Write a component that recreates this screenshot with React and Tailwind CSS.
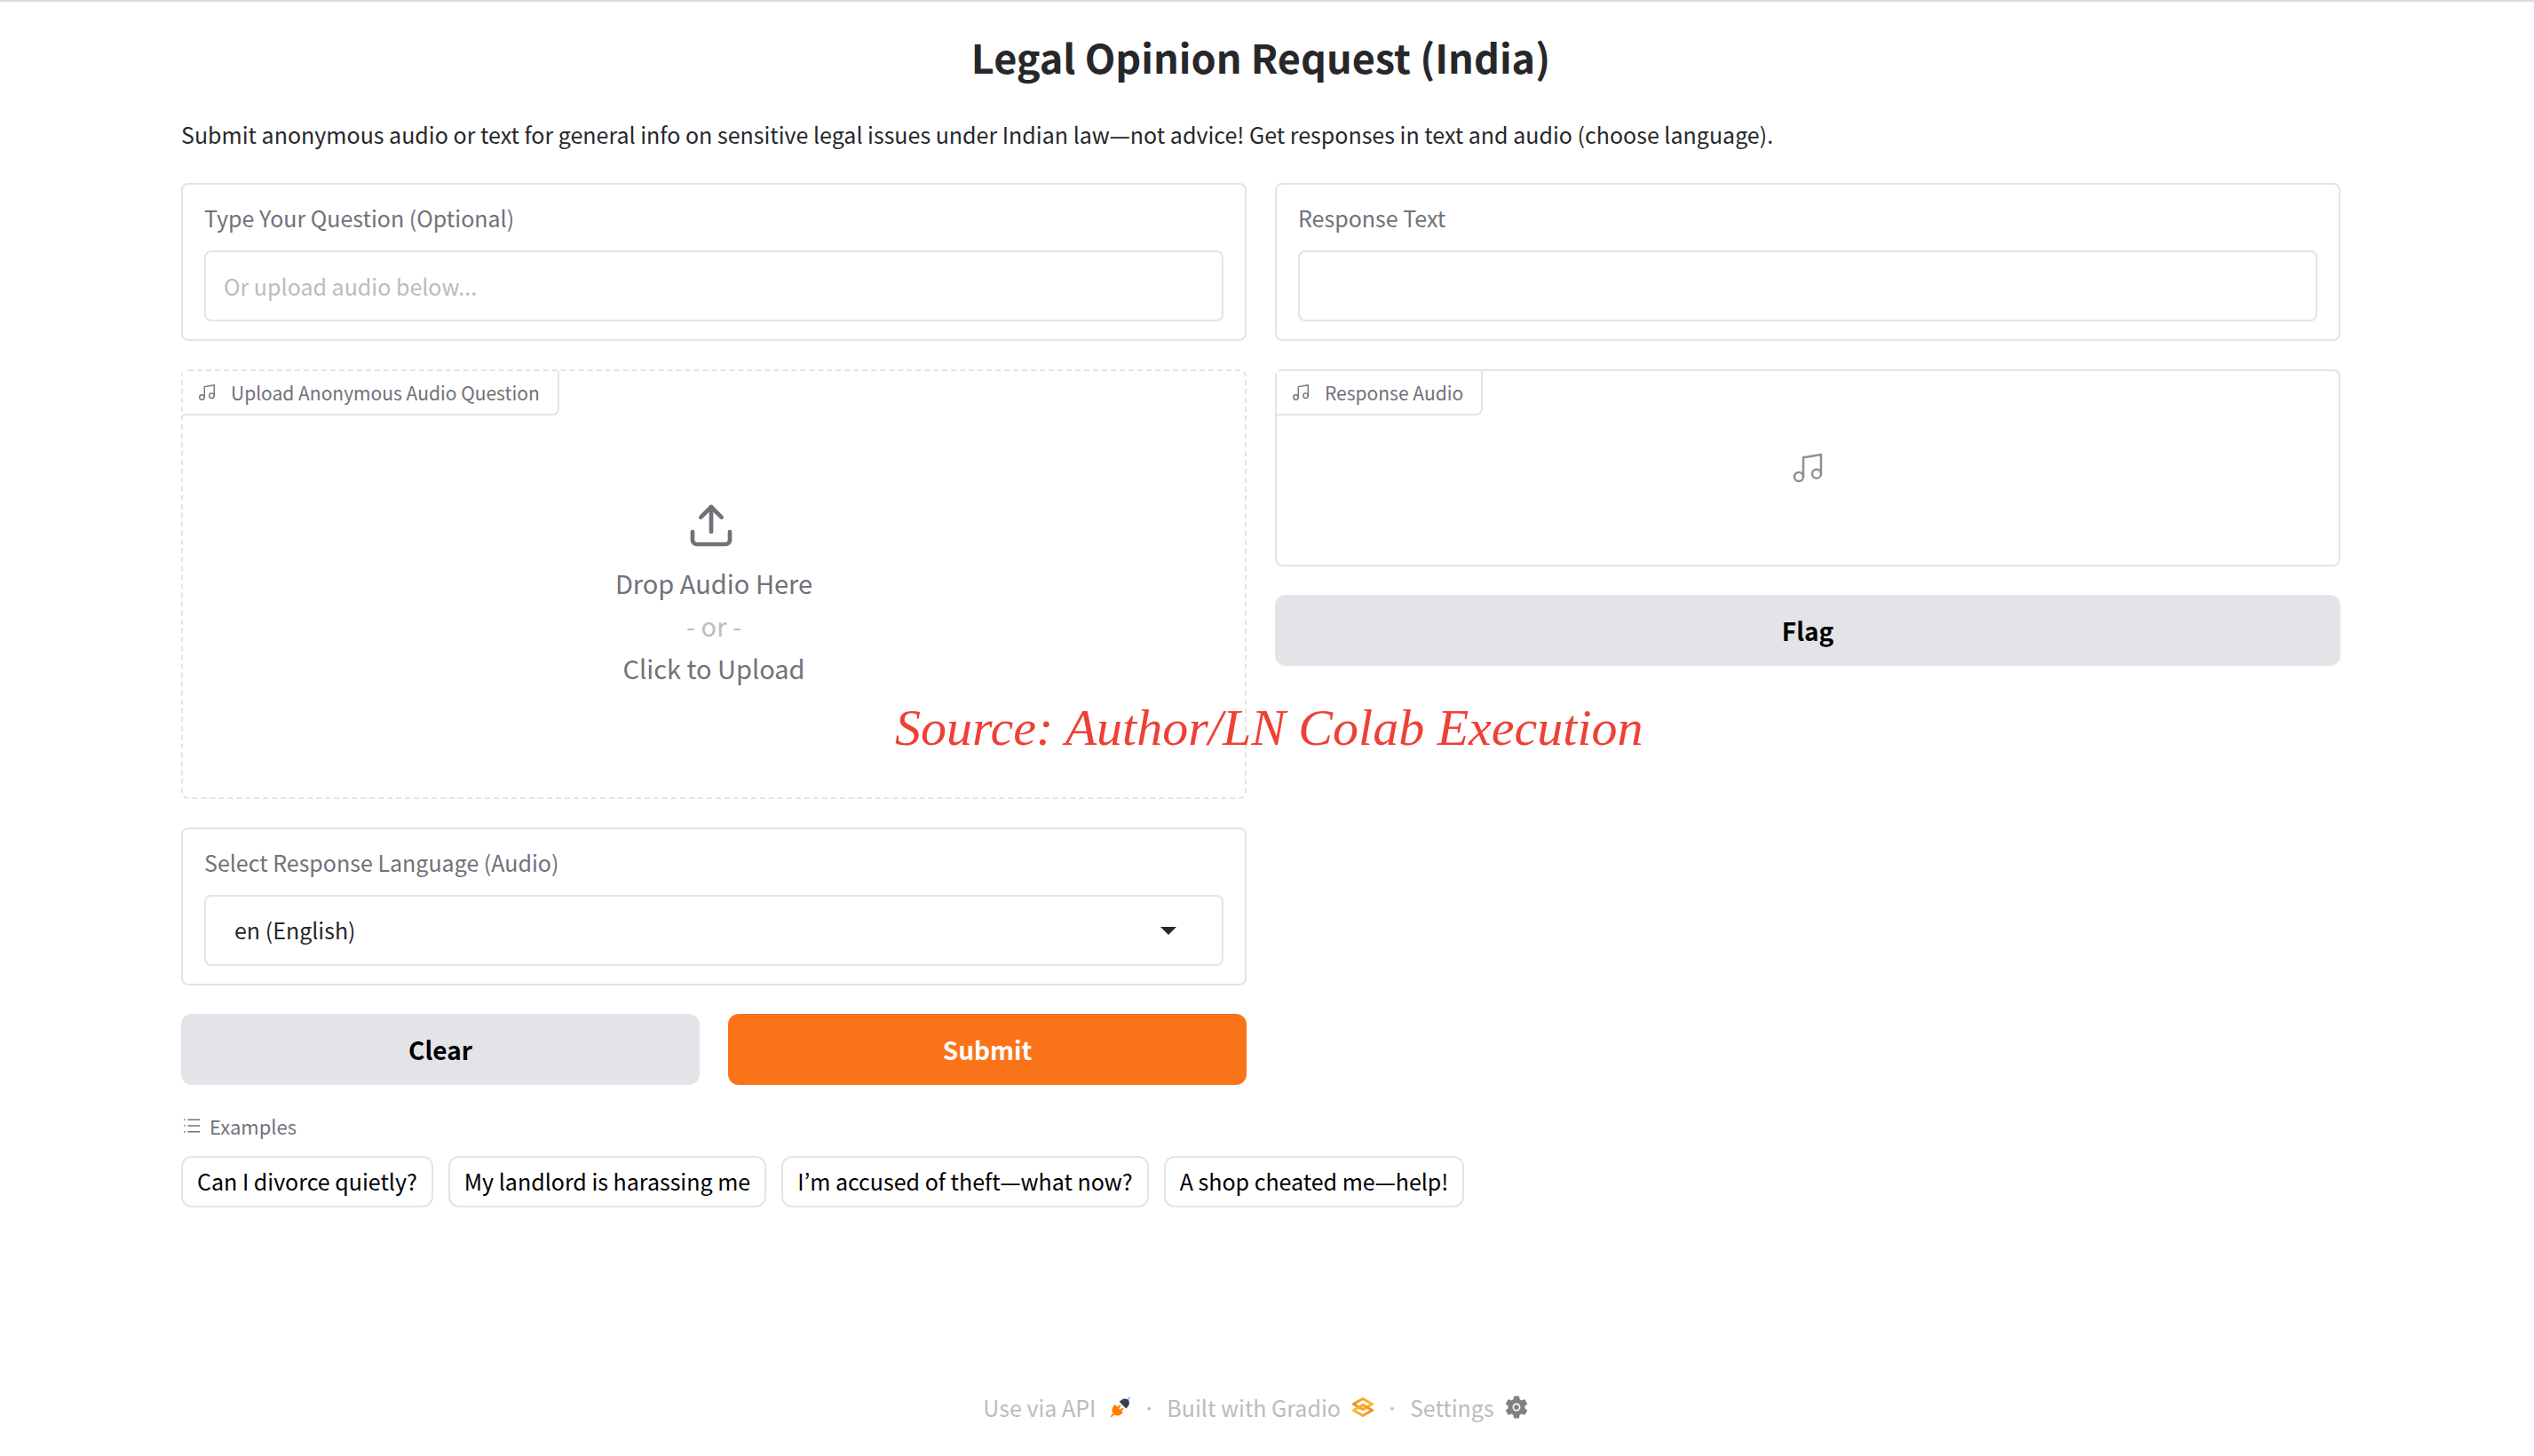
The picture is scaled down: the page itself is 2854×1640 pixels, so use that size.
import React from "react";

const examples = [
  ["Can I divorce quietly?"],
  ["My landlord is harassing me"],
  ["I’m accused of theft", "what now?"],
  ["A shop cheated me", "help!"],
];

function Dash() {
  return <span className="font-['Open_Sans','Noto_Sans',sans-serif] text-[23px]">—</span>;
}

function MusicIcon({ className }) {
  return (
    <svg viewBox="0 0 24 24" fill="none" stroke="currentColor" strokeWidth="1.5" strokeLinecap="round" strokeLinejoin="round" className={className} aria-hidden="true">
      <path d="M9 18V5l12-2v13" />
      <circle cx="6" cy="18" r="3" />
      <circle cx="18" cy="16" r="3" />
    </svg>
  );
}

function UploadIcon() {
  return (
    <svg viewBox="0 0 24 24" fill="none" stroke="currentColor" strokeWidth="2" strokeLinecap="round" strokeLinejoin="round" className="size-14" aria-hidden="true">
      <path d="M21 15v4a2 2 0 0 1-2 2H5a2 2 0 0 1-2-2v-4" />
      <polyline points="17 8 12 3 7 8" />
      <line x1="12" y1="3" x2="12" y2="15" />
    </svg>
  );
}

function ListIcon() {
  return (
    <svg viewBox="0 0 32 32" fill="currentColor" className="size-6" aria-hidden="true">
      <path d="M10 6h18v2H10zm0 18h18v2H10zm0-9h18v2H10zm-6 0h2v2H4zm0-9h2v2H4zm0 18h2v2H4z" />
    </svg>
  );
}

function PlugIcon() {
  return (
    <svg viewBox="0 0 24 24" className="size-6" aria-hidden="true">
      <path fill="#334155" d="M23 1.2 20.8 3.4c1.7 2.7 1.4 6-1 8.600l-1.600 1.600-7.500-7.500 1.600-1.600c2.500-2.400 5.600-2.600 8.200-.9L22.200.5z" />
      <path fill="#ff7c00" d="M4.400 10.600 6 9l2.700 2.700 2.400-2.400 1.500 1.500-2.400 2.400 1.500 1.500 2.400-2.400 1.500 1.500-2.400 2.400 1.700 1.700-1.700 1.700c-2.500 2.400-5.700 2.600-8.300.9L1.900 23.500.6 22.200l3.100-3.100c-1.900-2.600-1.700-6 .7-8.500z" />
    </svg>
  );
}

function GradioIcon() {
  return (
    <svg viewBox="0 0 26 24" fill="none" className="h-6 w-[26px]" aria-hidden="true">
      <defs>
        <linearGradient id="gradio-top" x1="0" y1="0" x2="1" y2="0">
          <stop offset="0" stopColor="#f58a1a" />
          <stop offset="1" stopColor="#f9c02e" />
        </linearGradient>
        <linearGradient id="gradio-bottom" x1="0" y1="0" x2="1" y2="0">
          <stop offset="0" stopColor="#f9c02e" />
          <stop offset="1" stopColor="#f58a1a" />
        </linearGradient>
      </defs>
      <path d="M13 2.500 23.500 8.500 13 14.500 2.500 8.500z" stroke="url(#gradio-top)" strokeWidth="3" strokeLinejoin="round" />
      <path d="M13 9.500 23.500 15.500 13 21.500 2.500 15.500z" stroke="url(#gradio-bottom)" strokeWidth="3" strokeLinejoin="round" />
    </svg>
  );
}

function GearIcon() {
  return (
    <svg viewBox="2 2 20 20" className="size-[26px]" fill="#808080" aria-hidden="true">
      <path d="M19.140 12.940c.04-.3.06-.61.06-.94 0-.32-.02-.64-.07-.94l2.030-1.580c.18-.14.23-.41.12-.61l-1.920-3.320c-.12-.22-.37-.29-.59-.22l-2.390.96c-.5-.38-1.030-.7-1.620-.94l-.36-2.540c-.04-.24-.24-.41-.48-.41h-3.840c-.24 0-.43.17-.47.41l-.36 2.540c-.59.24-1.130.57-1.620.94l-2.390-.96c-.22-.08-.47 0-.59.22L2.740 8.870c-.12.21-.08.47.12.61l2.030 1.580c-.05.3-.09.63-.09.94s.02.64.07.94l-2.030 1.580c-.18.14-.23.41-.12.61l1.920 3.320c.12.22.37.29.59.22l2.390-.96c.5.38 1.030.7 1.620.94l.36 2.540c.05.24.24.41.48.41h3.840c.24 0 .44-.17.47-.41l.36-2.540c.59-.24 1.130-.56 1.620-.94l2.390.96c.22.08.47 0 .59-.22l1.920-3.320c.12-.22.07-.47-.12-.61l-2.010-1.580z" />
      <circle cx="12" cy="12" r="3.400" fill="#fff" />
      <circle cx="12" cy="12" r="2.200" fill="#808080" />
    </svg>
  );
}

function Field({ id, label, children }) {
  return (
    <div className="flex flex-col gap-5 rounded-lg border-2 border-[#e4e4e7] px-6 py-5">
      <label htmlFor={id} className="text-[25px] leading-[34px] text-[#71717a]">{label}</label>
      {children}
    </div>
  );
}

function BlockLabel({ children }) {
  return (
    <div className="absolute top-0 left-0 flex h-[50px] items-center gap-4 rounded-br-lg border-r-2 border-b-2 border-[#e4e4e7] bg-white pr-5 pl-4 text-[21px] leading-9 text-[#71717a]">
      <MusicIcon className="size-[22px]" />
      <span>{children}</span>
    </div>
  );
}

function Separator() {
  return <span className="w-10 text-center">·</span>;
}

const inputClass = "h-20 w-full rounded-lg border-2 border-[#e4e4e7] bg-white px-5 text-[25px] text-[#27272a] outline-none placeholder:text-[#bbbbc2]";
const secondary = "h-20 w-full rounded-xl bg-[#e4e3e8] text-[28px] font-bold text-black";

export default function App() {
  return (
    <div className="relative min-h-screen border-t-2 border-[#dcdcdc] bg-white pr-[14px] font-['Noto_Sans_CJK_KR',sans-serif] text-[#27272a]">
      <div className="flex flex-col px-[204px] pt-[30px]">
        <h1 className="text-center text-[45px] leading-[64px] font-bold">Legal Opinion Request (India)</h1>
        <p className="mt-[34px] mb-8 text-[25px] leading-[42px]">
          Submit anonymous audio or text for general info on sensitive legal issues under Indian law<Dash />not advice! Get responses in text and audio (choose language).
        </p>

        <main className="grid grid-cols-2 items-start gap-8">
          <section className="flex flex-col gap-8">
            <Field id="question" label="Type Your Question (Optional)">
              <input id="question" type="text" placeholder="Or upload audio below..." className={inputClass} />
            </Field>

            <div className="relative flex h-[484px] flex-col rounded-lg border-2 border-dashed border-[#e4e4e7]">
              <BlockLabel>Upload Anonymous Audio Question</BlockLabel>
              <button type="button" className="flex flex-1 flex-col items-center justify-center pt-6 text-[29px] leading-[48px] text-[#71717a]">
                <span className="mb-3 pr-1.5"><UploadIcon /></span>
                <span>Drop Audio Here</span>
                <span className="text-[#bbbbc2]">- or -</span>
                <span>Click to Upload</span>
              </button>
            </div>

            <Field id="language" label="Select Response Language (Audio)">
              <div className="relative">
                <select id="language" defaultValue="en" className="h-20 w-full appearance-none rounded-lg border-2 border-[#e4e4e7] bg-white px-8 text-[25px] text-[#27272a] outline-none">
                  <option value="en">en (English)</option>
                  <option value="hi">hi (Hindi)</option>
                </select>
                <svg viewBox="0 0 18 9" className="pointer-events-none absolute top-9 right-[53px] h-[9px] w-[18px]" fill="#27272a" aria-hidden="true">
                  <path d="M0 0h18L9 9z" />
                </svg>
              </div>
            </Field>

            <div className="grid grid-cols-2 gap-8">
              <button type="button" className={secondary}>Clear</button>
              <button type="button" className="h-20 w-full rounded-xl bg-[#fa7319] text-[28px] font-bold text-white">Submit</button>
            </div>
          </section>

          <section className="flex flex-col gap-8">
            <Field id="response" label="Response Text">
              <input id="response" type="text" readOnly className={inputClass} />
            </Field>
            <div className="relative flex h-[222px] items-center justify-center rounded-lg border-2 border-[#e4e4e7]">
              <BlockLabel>Response Audio</BlockLabel>
              <MusicIcon className="size-10 text-[#909094]" />
            </div>
            <button type="button" className={secondary}>Flag</button>
          </section>
        </main>

        <section className="mt-8">
          <h2 className="flex items-center gap-2 text-[22px] leading-7 text-[#71717a]">
            <ListIcon />
            Examples
          </h2>
          <div className="mt-5 flex flex-wrap gap-[17px]">
            {examples.map((parts) => (
              <button key={parts[0]} type="button" className="h-[58px] rounded-xl border-2 border-[#e4e4e7] px-4 text-[25px] text-black">
                {parts[0]}
                {parts[1] && <><Dash />{parts[1]}</>}
              </button>
            ))}
          </div>
        </section>

        <footer className="mt-[204px] flex items-center justify-center pr-3 text-[25px] leading-[42px] text-[#bbbbc2]">
          <a href="#api" className="flex items-center gap-4">Use via API <PlugIcon /></a>
          <Separator />
          <a href="#gradio" className="flex items-center gap-3">Built with Gradio <GradioIcon /></a>
          <Separator />
          <a href="#settings" className="flex items-center gap-3">Settings <GearIcon /></a>
        </footer>
      </div>

      <p className="pointer-events-none absolute top-[782px] left-[1008px] font-['Z003','URW_Chancery_L','Apple_Chancery','Liberation_Serif',serif] text-[58px] leading-[72px] whitespace-nowrap text-[#ef4036] italic">
        Source: Author/LN Colab Execution
      </p>
    </div>
  );
}
